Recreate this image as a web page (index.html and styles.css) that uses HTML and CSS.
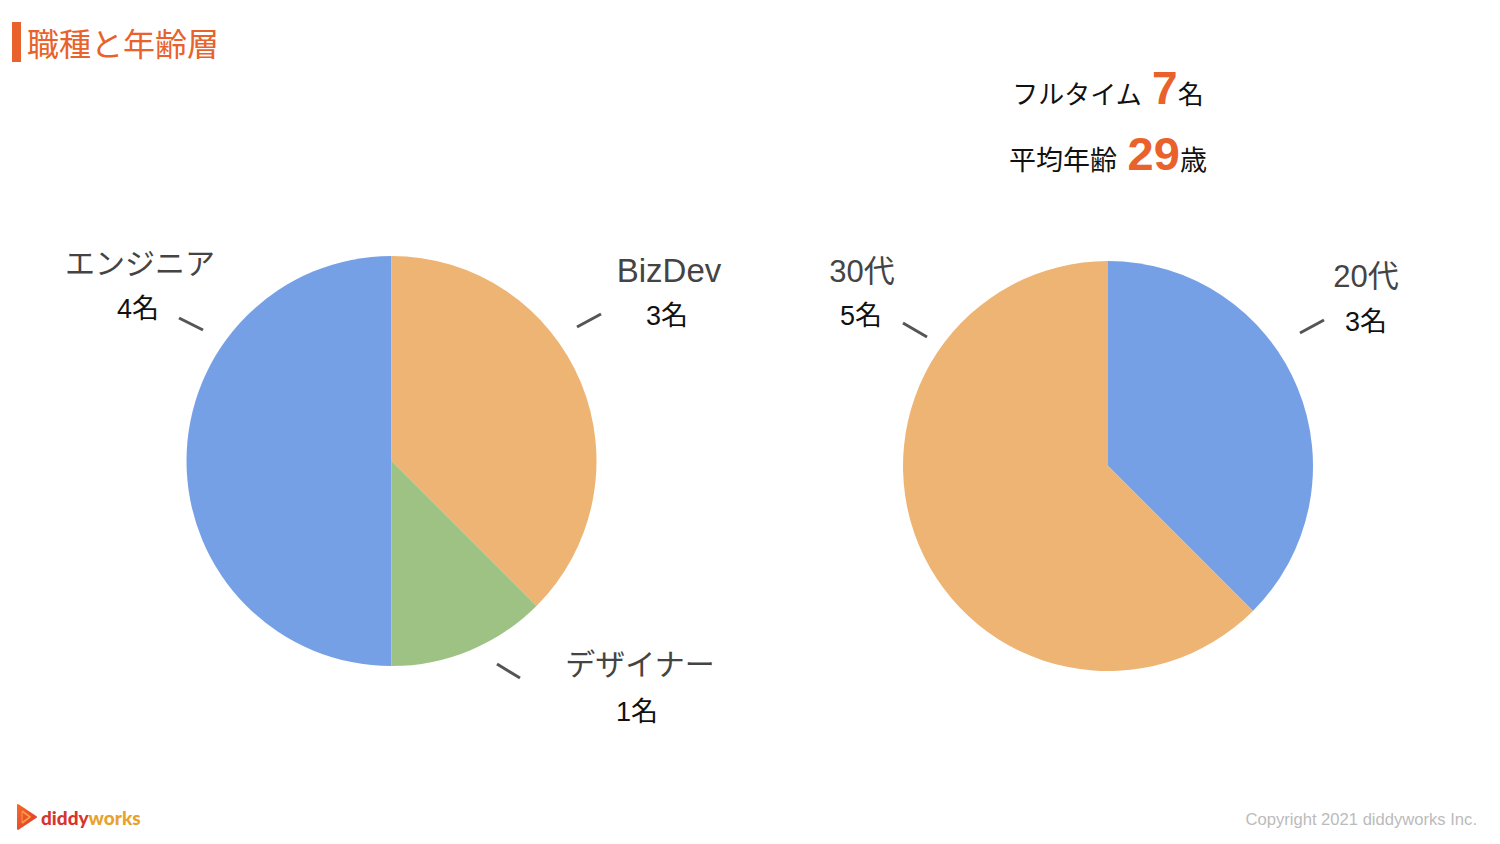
FILE: index.html
```html
<!DOCTYPE html>
<html lang="ja">
<head>
<meta charset="utf-8">
<title>職種と年齢層</title>
<link rel="stylesheet" href="styles.css">
</head>
<body>
<div class="slide">
  <main class="main">
    <section class="col col-left">
      <header class="title-row">
        <span class="title-bar"></span>
        <h1 class="title">職種と年齢層</h1>
      </header>
      <svg class="chart chart-left" width="760" height="728" viewBox="0 62 760 728">
        <path class="blue" d="M391.5 461 L391.5 666 A205 205 0 0 1 391.5 256 Z"/>
        <path class="orange" d="M391.5 461 L391.5 256 A205 205 0 0 1 536.46 605.96 Z"/>
        <path class="green" d="M391.5 461 L536.46 605.96 A205 205 0 0 1 391.5 666 Z"/>
        <line class="leader" x1="179" y1="318" x2="203" y2="330"/>
        <line class="leader" x1="577" y1="327" x2="601" y2="314"/>
        <line class="leader" x1="497" y1="664" x2="520" y2="678"/>
        <text class="lbl-name lbl-jp" x="140" y="274">エンジニア</text>
        <text class="lbl-count" x="138" y="318">4名</text>
        <text class="lbl-name lbl-en" x="669" y="282">BizDev</text>
        <text class="lbl-count" x="667" y="325">3名</text>
        <text class="lbl-name lbl-jp" x="640" y="675">デザイナー</text>
        <text class="lbl-count" x="637" y="721">1名</text>
      </svg>
    </section>
    <section class="col col-right">
      <div class="stats">
        <p class="stat stat-1">フルタイム&nbsp;<span class="num num-1">7</span>名</p>
        <p class="stat stat-2">平均年齢&nbsp;<span class="num num-2">29</span>歳</p>
      </div>
      <svg class="chart chart-right" width="740" height="590" viewBox="760 200 740 590">
        <path class="blue" d="M1108 466 L1108 261 A205 205 0 0 1 1252.96 610.96 Z"/>
        <path class="orange" d="M1108 466 L1252.96 610.96 A205 205 0 1 1 1108 261 Z"/>
        <line class="leader" x1="903" y1="323" x2="927" y2="337"/>
        <line class="leader" x1="1300" y1="333" x2="1324" y2="320"/>
        <text class="lbl-name" x="862" y="282">30代</text>
        <text class="lbl-count" x="861" y="325">5名</text>
        <text class="lbl-name" x="1366" y="287">20代</text>
        <text class="lbl-count" x="1366" y="331">3名</text>
      </svg>
    </section>
  </main>
  <footer class="footer">
    <div class="logo">
      <svg class="logo-mark" width="22" height="28" viewBox="0 0 22 28">
        <defs>
          <linearGradient id="lg" x1="0" y1="0" x2="1" y2="1">
            <stop offset="0" stop-color="#f26a2a"/>
            <stop offset="1" stop-color="#e2372b"/>
          </linearGradient>
        </defs>
        <path d="M2 2 L20 14 L2 26 Z" fill="url(#lg)" stroke="url(#lg)" stroke-width="2" stroke-linejoin="round"/>
        <path d="M6 8 L14 14 L6 20" fill="none" stroke="#f7a048" stroke-width="1.6" stroke-linejoin="round"/>
        <path d="M6 9 L6 19" fill="none" stroke="#f58a3c" stroke-width="1.4"/>
      </svg>
      <span class="logo-text"><span class="logo-a">diddy</span><span class="logo-b">works</span></span>
    </div>
    <p class="copyright">Copyright 2021 diddyworks Inc.</p>
  </footer>
</div>
</body>
</html>
```

FILE: styles.css
```css
* {
  box-sizing: border-box;
}

html, body {
  margin: 0;
  padding: 0;
  background: #ffffff;
}

body {
  font-family: "Liberation Sans", "Noto Sans CJK JP", sans-serif;
  color: #111111;
}

.slide {
  width: 1500px;
  height: 844px;
  display: flex;
  flex-direction: column;
  overflow: hidden;
}

.main {
  height: 790px;
  display: flex;
}

.col {
  display: flex;
  flex-direction: column;
}

.col-left {
  width: 760px;
}

.col-right {
  width: 740px;
}

.title-row {
  display: flex;
  align-items: center;
  gap: 6px;
  padding: 22px 0 0 12px;
  height: 62px;
}

.title-bar {
  width: 9px;
  height: 40px;
  background: #e9612b;
}

.title {
  margin: 0;
  font-family: "Noto Sans CJK JP", sans-serif;
  font-weight: 400;
  font-size: 32px;
  line-height: 40px;
  color: #e9612b;
}

.chart {
  display: block;
}

.blue {
  fill: #76a0e6;
}

.orange {
  fill: #eeb473;
}

.green {
  fill: #9dc284;
}

.leader {
  stroke: #555555;
  stroke-width: 3;
}

.lbl-name {
  font-family: "Liberation Sans", "Noto Sans CJK JP", sans-serif;
  font-size: 31px;
  fill: #444444;
  text-anchor: middle;
}

.lbl-jp {
  font-size: 30px;
}

.lbl-en {
  font-size: 33px;
}

.lbl-count {
  font-family: "Liberation Sans", "Noto Sans CJK JP", sans-serif;
  font-size: 27px;
  fill: #111111;
  text-anchor: middle;
}

.stats {
  height: 200px;
  width: 696px;
  padding-top: 62px;
  text-align: center;
}

.stat {
  margin: 0;
  height: 66px;
  line-height: 66px;
  color: #111111;
  white-space: nowrap;
}

.stat-1 {
  font-size: 26px;
}

.stat-2 {
  font-size: 27px;
}

.num {
  font-weight: 700;
  color: #e9612b;
  line-height: 1;
}

.num-1 {
  font-size: 46px;
  margin-left: 3px;
}

.num-2 {
  font-size: 47px;
  margin-left: 3px;
}

.footer {
  height: 54px;
  display: flex;
  justify-content: space-between;
  align-items: center;
  padding: 0 23px 0 16px;
}

.logo {
  display: flex;
  align-items: center;
  gap: 3px;
}

.logo-mark {
  display: block;
}

.logo-text {
  font-family: Lato, "Liberation Sans", sans-serif;
  font-weight: 900;
  font-size: 19px;
  line-height: 1;
}

.logo-a {
  color: #d8342c;
}

.logo-b {
  color: #e9a12b;
}

.copyright {
  margin: 0;
  padding-top: 6px;
  font-size: 16.6px;
  color: #bbbbbb;
}
```
